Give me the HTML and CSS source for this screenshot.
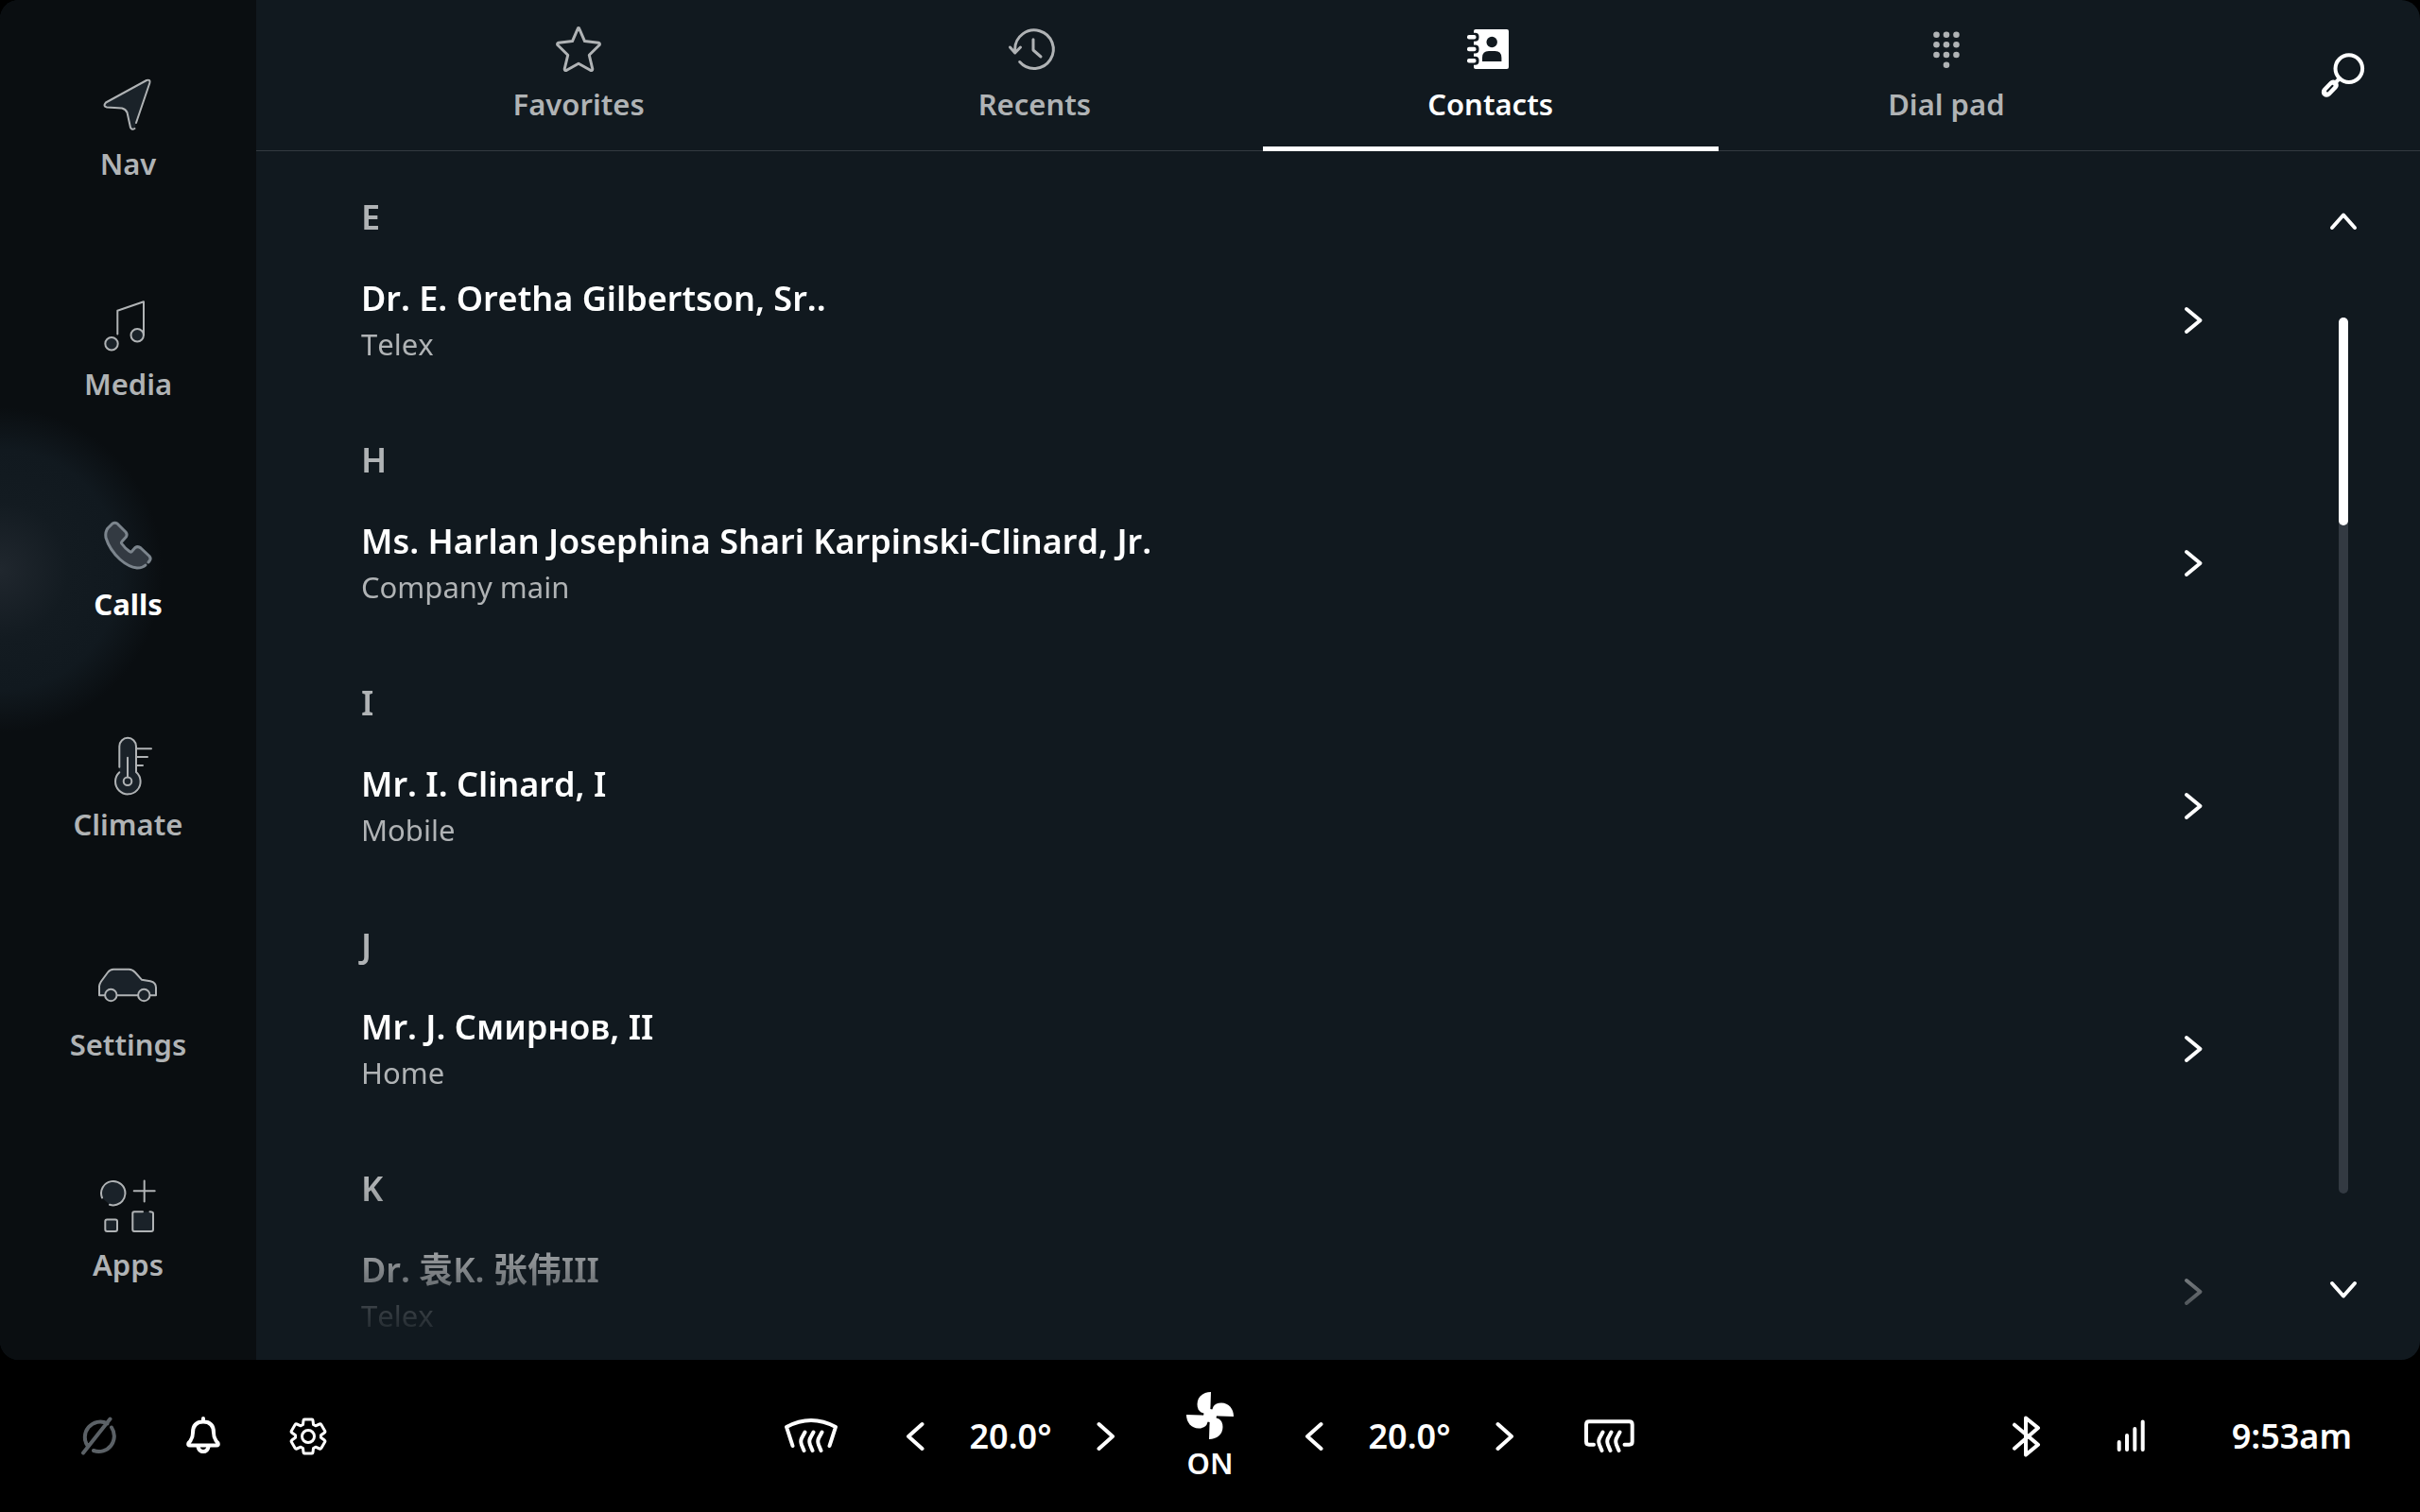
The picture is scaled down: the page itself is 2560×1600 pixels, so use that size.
FILE: index.html
```
<!DOCTYPE html>
<html lang="en">
<head>
  <meta charset="UTF-8" />
  <meta name="viewport" content="width=device-width, initial-scale=1.0"/>
  <title>Contacts</title>
  <link rel="stylesheet" href="styles.css">
</head>
<body>
  <div class="screen">
    <nav class="sidebar">
      <a class="nav-item" href="#">
        <svg class="nav-icon" viewBox="1 0 64 64"><path d="M41 51 55.3 9Q56.5 4.5 52 6L9 29.5Q5.5 33.5 10 34.5L26 35.5Q30 36.5 31.5 40L35 56Q36.5 59 39.5 57"/></svg>
        <span>Nav</span>
      </a>
      <a class="nav-item" href="#">
        <svg class="nav-icon" viewBox="1 0 64 64"><path class="hollow" d="M21.3 41.5V16.7L49 7.3V42.5"/><circle cx="15" cy="51.7" r="6.7"/><circle cx="42.2" cy="42.7" r="6.7"/></svg>
        <span>Media</span>
      </a>
      <a class="nav-item active" href="#">
        <svg class="nav-icon" viewBox="1 0 64 64"><path d="M54 50 55.5 48Q57 46 55 43.5L46 35Q43 32.5 40 34.5L36 39Q35 39.5 34 38.5 29 35 25.5 30 25 29 26 28L30.5 23Q32 20.5 30 18L21 9Q18.5 7.5 16 9L11 14Q8 18 9 24 13 37 24 47 33 55 42 56 48 56 51 53"/></svg>
        <span>Calls</span>
      </a>
      <a class="nav-item" href="#">
        <svg class="nav-icon" viewBox="1 0 64 64"><path d="M23.3 33.7V11.7a8.8 8.8 0 0 1 17.7 0V39a13.3 13.3 0 1 1-17.7.3"/><circle cx="32" cy="48.7" r="4.3"/><path d="M32 44.3V23.7M41 14.3H57M41 23H53M41 32H48"/></svg>
        <span>Climate</span>
      </a>
      <a class="nav-item" href="#">
        <svg class="nav-icon" viewBox="1 0 64 64"><path d="M2 42.3V32.5Q2.3 30 4 27.5L11 18Q13.5 14.7 17 14.7H33.5Q37 14.7 40 18L46.8 25.7 56 27.2Q62 28.5 62 34V42.3Z"/><circle cx="14.3" cy="42" r="6.2"/><circle cx="49.3" cy="42" r="6.2"/></svg>
        <span>Settings</span>
      </a>
      <a class="nav-item" href="#">
        <svg class="nav-icon" viewBox="1 0 64 64"><path d="M5 23.5A12.7 12.7 0 1 1 13 30.8"/><path d="M49.7 5.5V27.5M38.7 16.3H60.7"/><rect x="8.3" y="46.5" width="12.7" height="12.4" rx="2"/><path d="M48 38.2H39Q37.3 38.2 37.3 40V57Q37.3 59 39 59H57Q59 59 59 57V40Q59 38.2 55.5 38.2"/></svg>
        <span>Apps</span>
      </a>
    </nav>

    <main class="main">
      <header class="header">
        <div class="tabs" role="tablist">
          <button class="tab" role="tab">
            <svg class="tab-icon" viewBox="0 0 48 48"><path d="M24 1.5Q24.6 1.5 25 2.8L30.5 15.6 45 17.2Q47.3 18 46 19.8L35.3 30.3 38.8 45Q38.7 47.3 36.5 46.3L24 39.3 11.5 46.3Q9.3 47.3 9.2 45L12.7 30.3 2 19.8Q.7 18 3 17.2L17.5 15.6 23 2.8Q23.4 1.5 24 1.5Z"/></svg>
            <span>Favorites</span>
          </button>
          <button class="tab" role="tab">
            <svg class="tab-icon" viewBox="1 0 48 48"><path d="M4.7 27V24a20.3 20.3 0 1 1 5 13.5M-.5 22 4.7 28 10.5 22M24 13.7V25L32 32"/></svg>
            <span>Recents</span>
          </button>
          <button class="tab active" role="tab" aria-selected="true">
            <svg class="tab-icon solid" viewBox="0 0 48 48"><rect x="6" y="3" width="37" height="42" rx="2"/><g class="cut"><rect x="0" y="6.8" width="11.5" height="9" rx="4"/><rect x="0" y="19.5" width="11.5" height="9" rx="4"/><rect x="0" y="31.8" width="11.5" height="9" rx="4"/><circle cx="25.2" cy="16.5" r="5.7"/><path d="M15 37V33Q15 26 22 26H28.5Q35.4 26 35.4 33V37Z"/></g><rect x="-1" y="9" width="9.5" height="4.6" rx="2"/><rect x="-1" y="21.7" width="9.5" height="4.6" rx="2"/><rect x="-1" y="34" width="9.5" height="4.6" rx="2"/></svg>
            <span>Contacts</span>
          </button>
          <button class="tab" role="tab">
            <svg class="tab-icon solid" viewBox="0 0 48 48"><circle cx="13.5" cy="8.7" r="3.3"/><circle cx="24" cy="8.7" r="3.3"/><circle cx="34.5" cy="8.7" r="3.3"/><circle cx="13.5" cy="19.3" r="3.3"/><circle cx="24" cy="19.3" r="3.3"/><circle cx="34.5" cy="19.3" r="3.3"/><circle cx="13.5" cy="30" r="3.3"/><circle cx="24" cy="30" r="3.3"/><circle cx="34.5" cy="30" r="3.3"/><circle cx="24" cy="40.7" r="3.3"/></svg>
            <span>Dial pad</span>
          </button>
        </div>
        <button class="search" aria-label="Search">
          <svg class="icon" viewBox="0 0 48 48"><circle cx="29.8" cy="16.6" r="14.3"/><path d="M20 27 15.5 31.5"/><path class="handle" d="M13.3 34 6.3 41.3"/><path class="handle-slot" d="M12.5 34.8 7 40.5"/></svg>
        </button>
      </header>

      <div class="content">
        <div class="contacts">
          <section class="group">
            <h2>E</h2>
            <a class="contact" href="#">
              <span class="details"><span class="name">Dr. E. Oretha Gilbertson, Sr..</span><span class="type">Telex</span></span>
              <svg class="chevron" viewBox="0 0 32 32"><path d="M9 4 23.5 16 9 28"/></svg>
            </a>
          </section>
          <section class="group">
            <h2>H</h2>
            <a class="contact" href="#">
              <span class="details"><span class="name">Ms. Harlan Josephina Shari Karpinski-Clinard, Jr.</span><span class="type">Company main</span></span>
              <svg class="chevron" viewBox="0 0 32 32"><path d="M9 4 23.5 16 9 28"/></svg>
            </a>
          </section>
          <section class="group">
            <h2>I</h2>
            <a class="contact" href="#">
              <span class="details"><span class="name">Mr. I. Clinard, I</span><span class="type">Mobile</span></span>
              <svg class="chevron" viewBox="0 0 32 32"><path d="M9 4 23.5 16 9 28"/></svg>
            </a>
          </section>
          <section class="group">
            <h2>J</h2>
            <a class="contact" href="#">
              <span class="details"><span class="name">Mr. J. Смирнов, II</span><span class="type">Home</span></span>
              <svg class="chevron" viewBox="0 0 32 32"><path d="M9 4 23.5 16 9 28"/></svg>
            </a>
          </section>
          <section class="group">
            <h2>K</h2>
            <a class="contact" href="#">
              <span class="details"><span class="name">Dr. 袁K. 张伟III</span><span class="type">Telex</span></span>
              <svg class="chevron" viewBox="0 0 32 32"><path d="M9 4 23.5 16 9 28"/></svg>
            </a>
          </section>
        </div>
        <div class="scroller">
          <button aria-label="Scroll up"><svg class="chevron" viewBox="0 0 32 32"><path d="M4 23 16 9.5 28 23"/></svg></button>
          <div class="track"><div class="thumb"></div></div>
          <button aria-label="Scroll down"><svg class="chevron" viewBox="0 0 32 32"><path d="M4 9 16 22.5 28 9"/></svg></button>
        </div>
      </div>
    </main>
  </div>

  <footer class="bar">
    <div class="bar-left">
      <button class="off" aria-label="Driver profile"><svg class="icon" viewBox="0 0 48 48"><path d="M36.5 5.5 8 41.5M38 14.5A16.3 16.3 0 0 1 19 39M13 34.5A16.3 16.3 0 0 1 33.5 10.3"/></svg></button>
      <button aria-label="Notifications"><svg class="icon" viewBox="0 0 48 48"><path d="M24 5V8M13 20Q13 8.5 24 8.5T35 20C35 26 37 28.5 39.5 31Q40.5 33.5 38 33.5H10Q7.5 33.5 8.5 31C11 28.5 13 26 13 20ZM18.5 35Q19.5 40 24 40T29.5 35"/></svg></button>
      <button aria-label="System settings"><svg class="icon thin" viewBox="0 0 48 48"><path d="M20 6H28Q28.8 6 29 7L29.5 11.5 31.8 12.8 36 11Q37.2 10.6 37.8 11.5L41.7 18.2Q42.2 19.2 41.3 20L37.5 22.8V25.2L41.3 28Q42.2 28.8 41.7 29.8L37.8 36.5Q37.2 37.4 36 37L31.8 35.2 29.5 36.5 29 41Q28.8 42 28 42H20Q19.2 42 19 41L18.5 36.5 16.2 35.2 12 37Q10.8 37.4 10.2 36.5L6.3 29.8Q5.8 28.8 6.7 28L10.5 25.2V22.8L6.7 20Q5.8 19.2 6.3 18.2L10.2 11.5Q10.8 10.6 12 11L16.2 12.8 18.5 11.5 19 7Q19.2 6 20 6Z"/><circle cx="24" cy="24" r="6.5"/></svg></button>
    </div>

    <div class="climate">
      <button aria-label="Front defrost"><svg class="icon wide" viewBox="0 0 64 48"><path d="M12.5 34 6 14Q32 0 58 14L51.5 34M25.5 19.5 22 26Q20.5 29 22 33L24.5 39M34.5 19.5 31 26Q29.5 29 31 33L33.5 39M43.5 19.5 40 26Q38.5 29 40 33L42.5 39"/></svg></button>
      <div class="temp">
        <button aria-label="Cooler, left"><svg class="chevron" viewBox="0 0 32 32"><path d="M23.5 3 9 16 23.5 29"/></svg></button>
        <span class="degrees">20.0°</span>
        <button aria-label="Warmer, left"><svg class="chevron" viewBox="0 0 32 32"><path d="M8.5 3 23 16 8.5 29"/></svg></button>
      </div>
      <button class="fan">
        <svg class="fan-icon" viewBox="-28 -28 56 56">
          <path id="blade" d="M1-25C-7-25-13.5-20-13.5-12-13.5-8-12-5-9.5-3.5L0 0 .5-10Z"/>
          <use href="#blade" transform="rotate(90)"/>
          <use href="#blade" transform="rotate(180)"/>
          <use href="#blade" transform="rotate(270)"/>
          <circle r="7"/>
        </svg>
        <span>ON</span>
      </button>
      <div class="temp">
        <button aria-label="Cooler, right"><svg class="chevron" viewBox="0 0 32 32"><path d="M23.5 3 9 16 23.5 29"/></svg></button>
        <span class="degrees">20.0°</span>
        <button aria-label="Warmer, right"><svg class="chevron" viewBox="0 0 32 32"><path d="M8.5 3 23 16 8.5 29"/></svg></button>
      </div>
      <button aria-label="Rear defrost"><svg class="icon wide" viewBox="0 0 64 48"><path d="M16 32.7H11Q8 32.7 8 29.5V11.5Q8 8.3 11 8.3H53.5Q56.7 8.3 56.7 11.5V29.5Q56.7 32.7 53.5 32.7H48.5M25.5 19.5 22 26Q20.5 29 22 33L24.5 39M34.5 19.5 31 26Q29.5 29 31 33L33.5 39M43.5 19.5 40 26Q38.5 29 40 33L42.5 39"/></svg></button>
    </div>

    <div class="bar-right">
      <svg class="icon" viewBox="0 0 48 48"><path d="M12 11.7 37 32.7 24 43.5V4.5L37 15 12 36.7"/></svg>
      <svg class="icon" viewBox="0 0 48 48"><path d="M11.7 30V38M20 23V38M28.3 16V38M36.7 8.5V38"/></svg>
      <time class="clock">9:53am</time>
    </div>
  </footer>
</body>
</html>
```
FILE: styles.css
```
* {
  box-sizing: border-box;
}

body {
  background-color: #000;
  color: #fff;
  font-family: "Noto Sans", "Noto Sans CJK SC", sans-serif;
  font-size: 31px;
  font-kerning: none;
  line-height: 44px;
  margin: 0;
  height: 100vh;
  display: flex;
  flex-direction: column;
}

button {
  background: none;
  border: none;
  padding: 0;
  color: inherit;
  font: inherit;
  font-kerning: none;
  cursor: pointer;
}

a {
  color: inherit;
  text-decoration: none;
}

svg {
  display: block;
  overflow: visible;
  fill: none;
  stroke: currentColor;
  stroke-linecap: round;
  stroke-linejoin: round;
}

.screen {
  flex: 1;
  min-height: 0;
  display: flex;
  background-color: #11191f;
  border-radius: 20px;
  overflow: hidden;
}

/* sidebar */
.sidebar {
  width: 271px;
  flex-shrink: 0;
  padding: 20px 0;
  background-color: #0a0e11;
  display: flex;
  flex-direction: column;
  overflow: hidden;
}

.nav-item {
  flex: 1;
  position: relative;
  display: flex;
  flex-direction: column;
  align-items: center;
  justify-content: center;
  gap: 8px;
  color: #b0b3b5;
  font-weight: 600;
}

.nav-item.active {
  color: #fff;
  font-weight: 700;
}

.nav-item.active::before {
  content: "";
  position: absolute;
  left: -172px;
  top: 50%;
  width: 344px;
  height: 344px;
  margin-top: -172px;
  background: radial-gradient(closest-side, #20272e, #131b21 42%, #11191f 74%, #0a0e11);
}

.nav-item > * {
  position: relative;
}

.nav-icon {
  width: 64px;
  height: 64px;
  fill: #1a2229;
  stroke-width: 2;
}

.nav-icon .hollow {
  fill: none;
}

.active .nav-icon {
  color: #7c858d;
  fill: #333a42;
  stroke-width: 3;
}

/* tabs */
.main {
  flex: 1;
  min-width: 0;
  display: flex;
  flex-direction: column;
}

.header {
  height: 160px;
  flex-shrink: 0;
  display: flex;
  border-bottom: 1px solid #333a40;
}

.tabs {
  flex: 1;
  display: flex;
  padding: 0 98px 0 100px;
}

.tab {
  flex: 1;
  display: flex;
  flex-direction: column;
  align-items: center;
  gap: 12px;
  padding-top: 28px;
  margin-bottom: -1px;
  color: #b0b3b5;
  font-weight: 600;
}

.tab.active {
  color: #fff;
  border-bottom: 5px solid #fff;
}

.tab-icon {
  width: 48px;
  height: 48px;
  stroke-width: 3;
}

.solid {
  fill: currentColor;
  stroke: none;
}

.cut {
  fill: #11191f;
}

.search {
  width: 162px;
  display: flex;
  align-items: center;
  justify-content: center;
}

.search .icon {
  stroke-width: 4;
}

.search .handle {
  stroke-width: 11;
}

.search .handle-slot {
  stroke: #11191f;
  stroke-width: 2;
}

/* contacts */
.content {
  flex: 1;
  min-height: 0;
  display: flex;
}

.contacts {
  flex: 1;
  overflow: hidden;
  padding: 46px 62px 0 111px;
  -webkit-mask-image: linear-gradient(to top, transparent 10px, #000 190px);
  mask-image: linear-gradient(to top, transparent 10px, #000 190px);
}

.group {
  margin-bottom: 77px;
}

.group h2 {
  margin: 0 0 38px;
  color: #b0b3b5;
  font-size: 36px;
  font-weight: 600;
  line-height: 48px;
}

.contact {
  display: flex;
  align-items: center;
  justify-content: space-between;
}

.details {
  display: flex;
  flex-direction: column;
  gap: 2px;
}

.name {
  font-size: 36px;
  font-weight: 600;
  line-height: 48px;
}

.type {
  color: #b0b3b5;
}

.icon {
  width: 48px;
  height: 48px;
  stroke-width: 4;
}

.wide {
  width: 64px;
}

.thin {
  stroke-width: 3;
}

.chevron {
  width: 32px;
  height: 32px;
  stroke-width: 4;
}

.scroller {
  width: 162px;
  display: flex;
  flex-direction: column;
  align-items: center;
  gap: 86px;
  padding: 58px 0;
}

.track {
  flex: 1;
  width: 10px;
  border-radius: 5px;
  background-color: #333a42;
}

.thumb {
  height: 220px;
  border-radius: 5px;
  background-color: #fff;
}

/* bottom bar */
.bar {
  height: 161px;
  flex-shrink: 0;
  display: grid;
  grid-template-columns: 1fr auto 1fr;
  align-items: center;
  font-weight: 600;
}

.bar-left {
  display: flex;
  gap: 63px;
  padding-left: 80px;
}

.off {
  color: #5b6166;
}

.climate {
  display: flex;
  align-items: center;
  gap: 62px;
}

.temp {
  display: flex;
  align-items: center;
  gap: 41px;
}

.degrees {
  width: 88px;
  text-align: center;
  font-size: 36px;
  line-height: 48px;
}

.fan {
  width: 64px;
  display: flex;
  flex-direction: column;
  align-items: center;
}

.fan-icon {
  width: 56px;
  height: 56px;
  fill: currentColor;
  stroke: none;
}

.bar-right {
  display: flex;
  align-items: center;
  justify-content: flex-end;
  gap: 63px;
  padding-right: 72px;
}

.clock {
  margin-left: 20px;
  font-size: 36px;
  line-height: 48px;
}
```
